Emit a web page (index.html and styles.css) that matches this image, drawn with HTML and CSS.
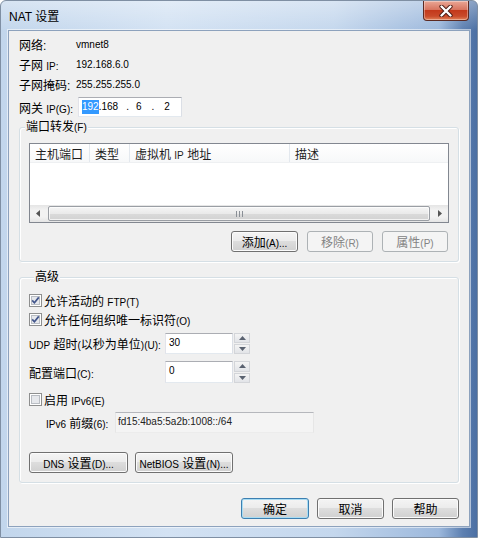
FILE: index.html
```html
<!DOCTYPE html>
<html lang="zh-CN">
<head>
<meta charset="utf-8">
<title>NAT 设置</title>
<link rel="stylesheet" href="styles.css">
</head>
<body>
<div class="window">
  <div class="titlebar">
    <span class="title">NAT 设置</span>
    <div class="close">
      <svg width="16" height="12" viewBox="0 0 16 12">
        <path d="M3.5 1.5 L12.5 10.5 M12.5 1.5 L3.5 10.5" stroke="#4a1a12" stroke-width="4.2" stroke-linecap="round" fill="none"/>
        <path d="M3.5 1.5 L12.5 10.5 M12.5 1.5 L3.5 10.5" stroke="#ffffff" stroke-width="2.4" stroke-linecap="round" fill="none"/>
      </svg>
    </div>
  </div>
  <div class="client">
    <div class="info">
      <div class="row"><span class="lbl">网络:</span><span class="val">vmnet8</span></div>
      <div class="row"><span class="lbl">子网 <span class="en">IP:</span></span><span class="val">192.168.6.0</span></div>
      <div class="row"><span class="lbl">子网掩码:</span><span class="val">255.255.255.0</span></div>
      <div class="row gw">
        <span class="lbl gwl">网关 <span class="en">IP(G):</span></span>
        <div class="ipbox tb">
          <span class="sel">192</span><span>.168</span><span class="d1">.</span><span class="o3">6</span><span class="d2">.</span><span class="o4">2</span>
        </div>
      </div>
    </div>

    <div class="group pf">
      <div class="gtitle">端口转发<span class="en">(F)</span></div>
      <div class="listview">
        <div class="lvhead">
          <span class="col c1"><span>主机端口</span></span>
          <span class="col c2"><span>类型</span></span>
          <span class="col c3"><span>虚拟机 <span class="en">IP</span> 地址</span></span>
          <span class="col c4"><span>描述</span></span>
        </div>
        <div class="lvbody"></div>
        <div class="hscroll">
          <div class="arrow">
            <svg width="5" height="7" viewBox="0 0 5 7"><path d="M4 0 L0 3.5 L4 7 Z" fill="#555"/></svg>
          </div>
          <div class="thumb">
            <svg width="7" height="6" viewBox="0 0 7 6"><path d="M0.5 0 V6 M3.5 0 V6 M6.5 0 V6" stroke="#8a8f96" stroke-width="1"/></svg>
          </div>
          <div class="arrow">
            <svg width="5" height="7" viewBox="0 0 5 7"><path d="M1 0 L5 3.5 L1 7 Z" fill="#555"/></svg>
          </div>
        </div>
      </div>
      <div class="btnrow">
        <button class="btn w67"><span>添加<span class="en">(A)...</span></span></button>
        <button class="btn w66 dis"><span>移除<span class="en">(R)</span></span></button>
        <button class="btn w66 dis"><span>属性<span class="en">(P)</span></span></button>
      </div>
    </div>

    <div class="group adv">
      <div class="gtitle">高级</div>
      <div class="cbrow r1">
        <svg class="cb" width="13" height="13" viewBox="0 0 13 13"><rect x="0.5" y="0.5" width="12" height="12" fill="#fff" stroke="#8e8f8f"/><rect x="2.5" y="2.5" width="8" height="8" fill="#e6e8ec" stroke="#b9bdc3"/><path d="M3.2 6.4 L5.4 8.8 L9.8 3.4" fill="none" stroke="#42558b" stroke-width="1.7"/></svg>
        <span>允许活动的 <span class="en">FTP(T)</span></span>
      </div>
      <div class="cbrow r2">
        <svg class="cb" width="13" height="13" viewBox="0 0 13 13"><rect x="0.5" y="0.5" width="12" height="12" fill="#fff" stroke="#8e8f8f"/><rect x="2.5" y="2.5" width="8" height="8" fill="#e6e8ec" stroke="#b9bdc3"/><path d="M3.2 6.4 L5.4 8.8 L9.8 3.4" fill="none" stroke="#42558b" stroke-width="1.7"/></svg>
        <span>允许任何组织唯一标识符<span class="en">(O)</span></span>
      </div>
      <div class="numrow r3">
        <span class="nlbl"><span><span class="en">UDP</span> 超时<span class="en">(</span>以秒为单位<span class="en">)(U):</span></span></span>
        <div class="tb num"><span class="en">30</span></div>
        <div class="spin">
          <span class="sb"><svg width="7" height="4" viewBox="0 0 7 4"><path d="M0 4 L3.5 0 L7 4 Z" fill="#5a6270"/></svg></span>
          <span class="sb"><svg width="7" height="4" viewBox="0 0 7 4"><path d="M0 0 L3.5 4 L7 0 Z" fill="#5a6270"/></svg></span>
        </div>
      </div>
      <div class="numrow r4">
        <span class="nlbl"><span>配置端口<span class="en">(C):</span></span></span>
        <div class="tb num"><span class="en">0</span></div>
        <div class="spin">
          <span class="sb"><svg width="7" height="4" viewBox="0 0 7 4"><path d="M0 4 L3.5 0 L7 4 Z" fill="#5a6270"/></svg></span>
          <span class="sb"><svg width="7" height="4" viewBox="0 0 7 4"><path d="M0 0 L3.5 4 L7 0 Z" fill="#5a6270"/></svg></span>
        </div>
      </div>
      <div class="cbrow r5">
        <svg class="cb" width="13" height="13" viewBox="0 0 13 13"><rect x="0.5" y="0.5" width="12" height="12" fill="#fff" stroke="#8e8f8f"/><rect x="2.5" y="2.5" width="8" height="8" fill="#e6e8ec" stroke="#b9bdc3"/></svg>
        <span>启用 <span class="en">IPv6(E)</span></span>
      </div>
      <div class="v6row">
        <span class="v6lbl"><span><span class="en">IPv6</span> 前缀<span class="en">(6):</span></span></span>
        <div class="v6field"><span class="en">fd15:4ba5:5a2b:1008::/64</span></div>
      </div>
      <div class="btnrow2">
        <button class="btn dns"><span><span class="en">DNS</span> 设置<span class="en">(D)...</span></span></button>
        <button class="btn nb"><span><span class="en">NetBIOS</span> 设置<span class="en">(N)...</span></span></button>
      </div>
    </div>

    <div class="footer">
      <button class="btn ok">确定</button>
      <button class="btn w67">取消</button>
      <button class="btn w67">帮助</button>
    </div>
  </div>
</div>
</body>
</html>
```

FILE: styles.css
```css
* { box-sizing: border-box; }
html, body { margin: 0; padding: 0; }
body {
  width: 478px;
  height: 538px;
  overflow: hidden;
  background: #ffffff;
  font-family: "Liberation Sans", "Noto Sans CJK SC", sans-serif;
  font-size: 12px;
  color: #000;
}
.en { font-size: 10px; }

.window {
  width: 478px;
  height: 538px;
  display: flex;
  flex-direction: column;
  border: 1px solid #7f8fa3;
  border-radius: 6px 6px 0 0;
  background:
    linear-gradient(to bottom, rgba(255,255,255,0.35) 0px, rgba(255,255,255,0) 30px),
    linear-gradient(to right, #c2d6ec 0%, #d3e2f3 35%, #c4d7ed 70%, #9cb8dc 92%, #5d80b1 97%, #4b6fa3 100%);
}

.titlebar {
  height: 29px;
  flex: none;
  display: flex;
  justify-content: space-between;
  align-items: flex-start;
  padding-left: 8px;
  padding-right: 8px;
}
.title {
  margin-top: 8px;
  line-height: 16px;
  font-size: 12px;
  color: #000;
}
.close {
  width: 46px;
  height: 20px;
  border: 1px solid #5c2a22;
  border-top: none;
  border-radius: 0 0 4px 4px;
  background: linear-gradient(to bottom, #eaa796 0%, #d87560 45%, #c3391b 50%, #c94a2a 80%, #e28359 100%);
  box-shadow: inset 0 0 0 1px rgba(255,255,255,0.35);
  display: flex;
  align-items: center;
  justify-content: center;
}

.client {
  margin-left: 7px;
  width: 462px;
  height: 497px;
  flex: none;
  background: #f0f0f0;
  border: 1px solid #8da2bd;
  box-shadow: 0 0 0 1px rgba(255,255,255,0.55);
  padding: 0 10px;
  display: flex;
  flex-direction: column;
}

/* info rows */
.info {
  display: flex;
  flex-direction: column;
  gap: 2px;
  padding-top: 4px;
}
.row {
  height: 18px;
  display: flex;
  align-items: center;
}
.lbl { width: 57px; flex: none; }
.val { font-size: 10px; }
.row.gw { height: 20px; margin-top: 2px; }
.gwl { width: 59px; }

.tb {
  background: #fff;
  border: 1px solid;
  border-color: #abadb3 #dbdfe6 #e3e9ef #e2e3ea;
}
.ipbox {
  width: 104px;
  height: 20px;
  display: flex;
  align-items: center;
  padding-left: 3px;
  font-size: 10px;
}
.ipbox span { line-height: 14px; }
.sel { background: #3399ff; color: #fff; }
.d1 { margin-left: 8px; }
.o3 { margin-left: 7px; }
.d2 { margin-left: 10px; }
.o4 { margin-left: 10px; }

/* group boxes */
.group {
  border: 1px solid #d5dfe5;
  border-radius: 3px;
  box-shadow: inset 1px 1px 0 #fff, 1px 1px 0 #fff;
  display: flex;
  flex-direction: column;
}
.gtitle {
  align-self: flex-start;
  margin: -9px 0 0 5px;
  padding: 0 1px;
  line-height: 16px;
  background: #f0f0f0;
}
.pf { margin-top: 10px; padding-bottom: 9px; }
.adv { margin-top: 15px; padding-bottom: 9px; padding-left: 9px; }

/* list view */
.listview {
  margin: 7px 9px 0 9px;
  height: 80px;
  border: 1px solid #828790;
  background: #fff;
  display: flex;
  flex-direction: column;
}
.lvhead {
  height: 19px;
  display: flex;
  align-items: center;
  background: linear-gradient(to bottom, #ffffff 0%, #f7f8f9 100%);
  border-bottom: 1px solid #eef0f2;
}
.col {
  height: 100%;
  display: flex;
  align-items: center;
  padding-left: 5px;
  border-right: 1px solid #e3e8ee;
  color: #1e1e1e;
}
.c1 { width: 60px; }
.c2 { width: 40px; }
.c3 { width: 160px; }
.c4 { flex: 1; border-right: none; }
.lvbody { flex: 1; }
.hscroll {
  height: 17px;
  display: flex;
  align-items: stretch;
  background: linear-gradient(to bottom, #e5e5e5 0%, #f2f2f2 30%, #f2f2f2 70%, #e5e5e5 100%);
}
.arrow {
  width: 17px;
  flex: none;
  display: flex;
  align-items: center;
  justify-content: center;
}
.thumb {
  flex: 1;
  margin: 1px 1px;
  border: 1px solid #9a9ea4;
  border-radius: 2px;
  background: linear-gradient(to bottom, #f5f5f5 0%, #eaeaea 50%, #dadada 51%, #d2d2d2 100%);
  box-shadow: inset 0 0 0 1px rgba(255,255,255,0.7);
  display: flex;
  align-items: center;
  justify-content: center;
}

/* buttons */
.btn {
  height: 21px;
  padding: 0;
  font: inherit;
  color: #000;
  border: 1px solid #707070;
  border-radius: 3px;
  background: linear-gradient(to bottom, #f4f4f4 0%, #ececec 45%, #dddddd 50%, #d0d0d0 100%);
  box-shadow: inset 0 0 0 1px #fbfbfb;
  display: flex;
  align-items: center;
  justify-content: center;
}
.btn.dis {
  border-color: #adb2b5;
  background: #f4f4f4;
  color: #838383;
  box-shadow: none;
}
.w66 { width: 66px; }
.w67 { width: 67px; }
.btnrow {
  display: flex;
  justify-content: flex-end;
  gap: 9px;
  margin-top: 8px;
  padding-right: 10px;
}

/* advanced */
.cbrow {
  height: 14px;
  display: flex;
  align-items: center;
  gap: 2px;
}
.cb { flex: none; }
.r1 { margin-top: 8px; }
.r2 { margin-top: 5px; }
.numrow {
  display: flex;
  align-items: stretch;
}
.r3 { margin-top: 7px; height: 21px; }
.r4 { margin-top: 7px; height: 22px; }
.nlbl {
  width: 136px;
  flex: none;
  display: flex;
  align-items: center;
}
.num {
  width: 68px;
  padding: 2px 0 0 3px;
  line-height: 12px;
}
.spin {
  width: 16px;
  margin-left: 1px;
  display: flex;
  flex-direction: column;
  gap: 1px;
}
.sb {
  flex: 1;
  border: 1px solid #d3d5d9;
  background: linear-gradient(to bottom, #f4f4f4, #e2e4e8);
  display: flex;
  align-items: center;
  justify-content: center;
}
.r5 { margin-top: 9px; }
.v6row {
  margin-top: 6px;
  height: 21px;
  display: flex;
  align-items: stretch;
  padding-left: 17px;
}
.v6lbl {
  width: 69px;
  flex: none;
  display: flex;
  align-items: center;
}
.v6field {
  width: 199px;
  background: #f4f4f4;
  border: 1px solid;
  border-color: #b5b7bc #e6e6e6 #ececec #e6e6e6;
  padding: 2px 0 0 2px;
  line-height: 12px;
  color: #222;
}
.btnrow2 {
  display: flex;
  gap: 7px;
  margin-top: 19px;
}
.dns { width: 99px; }
.nb { width: 98px; }

/* footer */
.footer {
  display: flex;
  justify-content: flex-end;
  gap: 8px;
  margin-top: 15px;
}
.btn.ok {
  width: 68px;
  border-color: #3c7fb1;
  box-shadow: inset 0 0 0 1px #a8dcf3;
}
```
